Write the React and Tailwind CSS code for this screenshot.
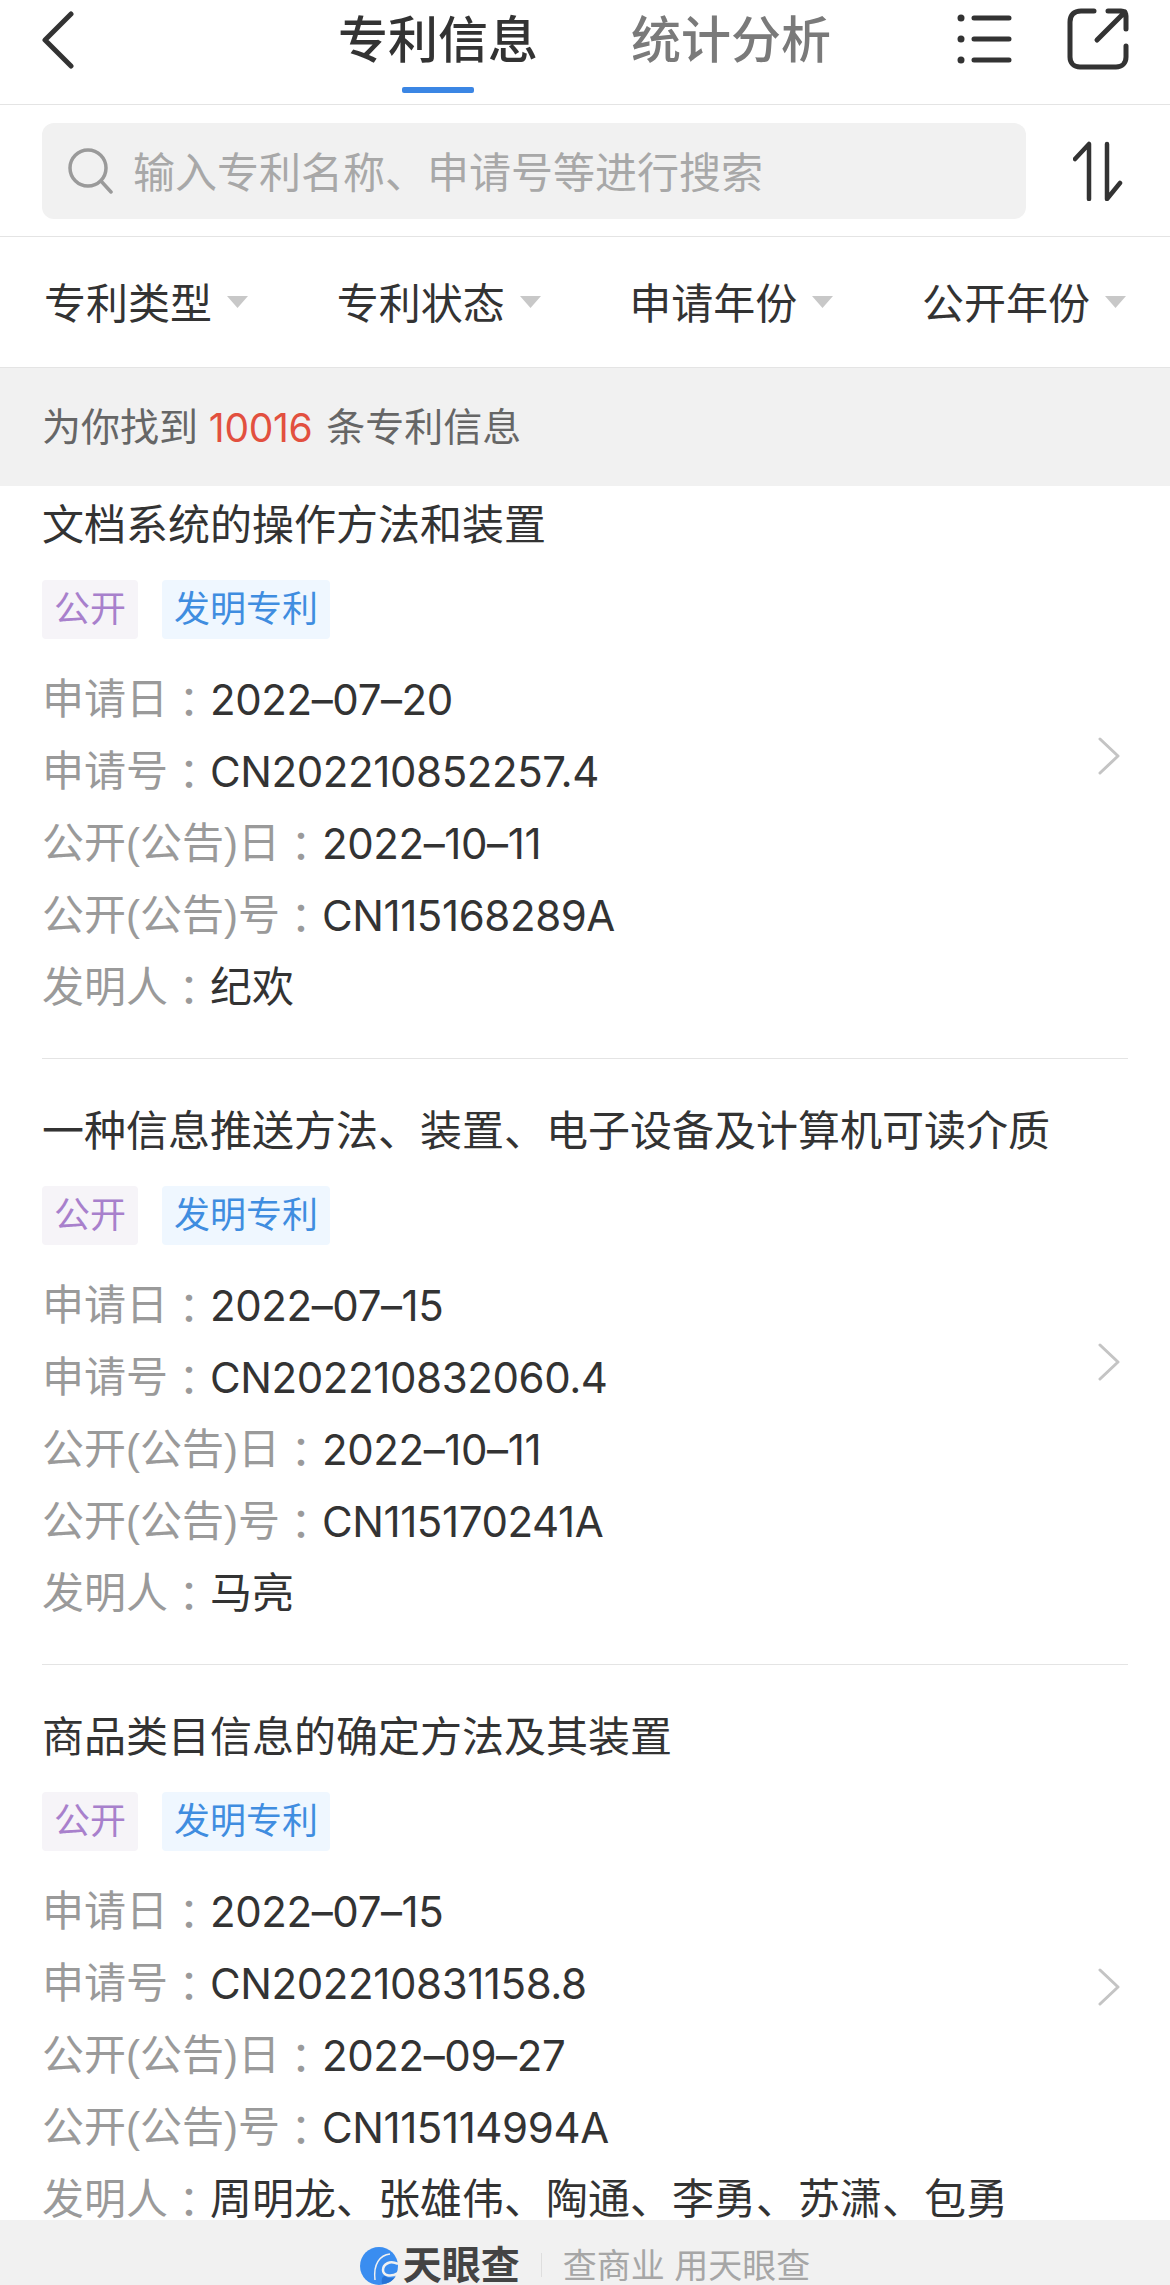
import React from 'react'

const font = { fontFamily: '"Liberation Sans", "Noto Sans CJK SC", sans-serif' }
const latin = { fontFamily: 'Inter, "Noto Sans CJK SC", sans-serif' }

const patents = [
  {
    title: '文档系统的操作方法和装置',
    date: '2022–07–20',
    appNo: 'CN202210852257.4',
    pubDate: '2022–10–11',
    pubNo: 'CN115168289A',
    inventor: '纪欢',
    pad: '',
  },
  {
    title: '一种信息推送方法、装置、电子设备及计算机可读介质',
    date: '2022–07–15',
    appNo: 'CN202210832060.4',
    pubDate: '2022–10–11',
    pubNo: 'CN115170241A',
    inventor: '马亮',
    pad: '',
  },
  {
    title: '商品类目信息的确定方法及其装置',
    date: '2022–07–15',
    appNo: 'CN202210831158.8',
    pubDate: '2022–09–27',
    pubNo: 'CN115114994A',
    inventor: '周明龙、张雄伟、陶通、李勇、苏潇、包勇',
    pad: 'pb-[72px]',
  },
]

const filters = ['专利类型', '专利状态', '申请年份', '公开年份']

function Row({ label, value, name }) {
  return (
    <div className="h-[72px] flex items-center whitespace-nowrap text-[42px] leading-[40px]">
      <span className="text-[#9a9a9a]">{label}</span>
      <span className="text-[#9a9a9a] font-['Noto_Sans_CJK_TC'] w-[42px]">：</span>
      {name ? (
        <span className="text-[#333]">{value}</span>
      ) : (
        <span className="text-[#333] tracking-[-0.4px]" style={latin}>{value}</span>
      )}
    </div>
  )
}

function PatentCard({ item }) {
  return (
    <div className="mx-[42px] border-b border-[#e4e4e4] flex items-center">
      <div className={`flex-1 pt-[46px] pb-[34px] ${item.pad}`}>
        <div className="text-[42px] leading-[54px] text-[#333]">{item.title}</div>
        <div className="flex gap-[24px] mt-[27px] mb-[25px]">
          <span className="h-[59px] px-[12px] flex items-center rounded-[4px] bg-[#f6f4f8] text-[#a880cc] text-[36px]">公开</span>
          <span className="h-[59px] px-[12px] flex items-center rounded-[4px] bg-[#eff7ff] text-[#3f8de0] text-[36px]">发明专利</span>
        </div>
        <Row label="申请日" value={item.date} />
        <Row label="申请号" value={item.appNo} />
        <Row label="公开(公告)日" value={item.pubDate} />
        <Row label="公开(公告)号" value={item.pubNo} />
        <Row label="发明人" value={item.inventor} name />
      </div>
      <svg width="24" height="38" viewBox="0 0 24 38" fill="none" stroke="#c4c4c4" strokeWidth="3" strokeLinecap="round" strokeLinejoin="round" className="shrink-0 mr-[7px]">
        <path d="M3 2l18 17L3 36" />
      </svg>
    </div>
  )
}

function Logo() {
  return (
    <svg width="38" height="38" viewBox="0 0 38 38" fill="none" className="shrink-0">
      <circle cx="19" cy="19" r="19" fill="#3a8df0" />
      <path d="M30 7C20 8 13 17 15 33" stroke="#f1f1f1" strokeWidth="1.5" />
      <path d="M38 17C30 13 23 17 23 23C23 28 30 31 38 26" stroke="#f1f1f1" strokeWidth="2.5" />
      <path d="M22 37C21 31 23 29 25 29C29 32 33 32 36 29C33 34 28 37 22 37Z" fill="#2673d6" />
    </svg>
  )
}

export default function App() {
  return (
    <div className="w-[1170px] h-[2285px] bg-white flex flex-col overflow-hidden" style={font}>
      {/* header */}
      <div className="h-[105px] shrink-0 border-b border-[#e4e4e4] flex pl-[42px] relative">
        <svg width="32" height="58" viewBox="0 0 32 58" fill="none" stroke="#333" strokeWidth="5" strokeLinecap="round" strokeLinejoin="round" className="mt-[11px]">
          <path d="M29 3L3 29l26 26" />
        </svg>
        <div className="flex gap-[93px] ml-[264px] text-[50px] leading-[82px] whitespace-nowrap">
          <div className="text-[#333] font-medium">专利信息</div>
          <div className="text-[#7a7a7a] font-medium">统计分析</div>
        </div>
        <div className="absolute left-[402px] top-[87px] w-[72px] h-[6px] rounded-[2px] bg-[#3b86e4]" />
        <svg width="56" height="54" viewBox="0 0 56 54" fill="none" stroke="#333" strokeLinecap="round" className="ml-[125px] mt-[12px]">
          <circle cx="5" cy="6" r="3.5" fill="#333" stroke="none" />
          <circle cx="5" cy="27" r="3.5" fill="#333" stroke="none" />
          <circle cx="5" cy="48" r="3.5" fill="#333" stroke="none" />
          <path d="M18 6h35M18 27h35M18 48h35" strokeWidth="5" />
        </svg>
        <svg width="62" height="62" viewBox="0 0 62 62" fill="none" stroke="#333" strokeWidth="5" strokeLinecap="round" strokeLinejoin="round" className="ml-[55px] mt-[8px]">
          <path d="M27 3H14C7 3 3 7 3 14v35c0 6 4 10 10 10h36c6 0 10-4 10-10V38" />
          <path d="M41 3h13c3 0 5 2 5 5v13M58 4L30 32" />
        </svg>
      </div>

      {/* search */}
      <div className="h-[132px] shrink-0 border-b border-[#e4e4e4] flex items-center pl-[42px]">
        <div className="w-[984px] h-[96px] rounded-[12px] bg-[#f1f1f1] flex items-center pl-[26px] text-[42px] text-[#a8a8a8] whitespace-nowrap">
          <svg width="46" height="46" viewBox="0 0 46 46" fill="none" stroke="#9a9a9a" strokeWidth="3.5" strokeLinecap="round" className="mr-[19px]">
            <circle cx="20" cy="20" r="18" />
            <path d="M33 33l10 11" />
          </svg>
          <span className="pt-[5px]">输入专利名称、申请号等进行搜索</span>
        </div>
        <svg width="50" height="60" viewBox="0 0 50 60" fill="none" stroke="#333" strokeWidth="4.5" strokeLinecap="round" strokeLinejoin="round" className="ml-[47px]">
          <path d="M2 18L16 3v55M34 3v55l13-16" />
        </svg>
      </div>

      {/* filters */}
      <div className="h-[131px] shrink-0 border-b border-[#e4e4e4] flex items-center justify-between pl-[44px] pr-[44px] text-[42px] text-[#333] whitespace-nowrap">
        {filters.map((name) => (
          <div key={name} className="flex items-center">
            <span className="pt-[5px]">{name}</span>
            <svg width="21" height="12" viewBox="0 0 21 12" className="ml-[15px]">
              <path d="M0 0h21L10.5 12z" fill="#c8c8c8" />
            </svg>
          </div>
        ))}
      </div>

      {/* result count */}
      <div className="h-[118px] shrink-0 bg-[#f1f1f1] flex items-center pl-[42px] pt-[2px] text-[39px] text-[#666] whitespace-pre">
        为你找到 <span className="text-[#e2503f] tracking-[-0.3px] mr-[3px]" style={latin}>10016</span> 条专利信息
      </div>

      {/* list, scrolled a little */}
      <div className="flex-1 min-h-0 overflow-hidden">
        <div className="-mt-[33px]">
          {patents.map((item) => (
            <PatentCard key={item.appNo} item={item} />
          ))}
        </div>
      </div>

      {/* footer */}
      <div className="h-[65px] shrink-0 bg-[#f1f1f1] flex items-start justify-center pt-[27px] overflow-hidden whitespace-pre">
        <Logo />
        <span className="ml-[5px] text-[39px] leading-[38px] font-bold text-[#444]">天眼查</span>
        <span className="w-px h-[24px] mx-[21px] mt-[6px] bg-[#dedede]" />
        <span className="text-[34px] leading-[38px] text-[#a6a6a6]">查商业 用天眼查</span>
      </div>
    </div>
  )
}
